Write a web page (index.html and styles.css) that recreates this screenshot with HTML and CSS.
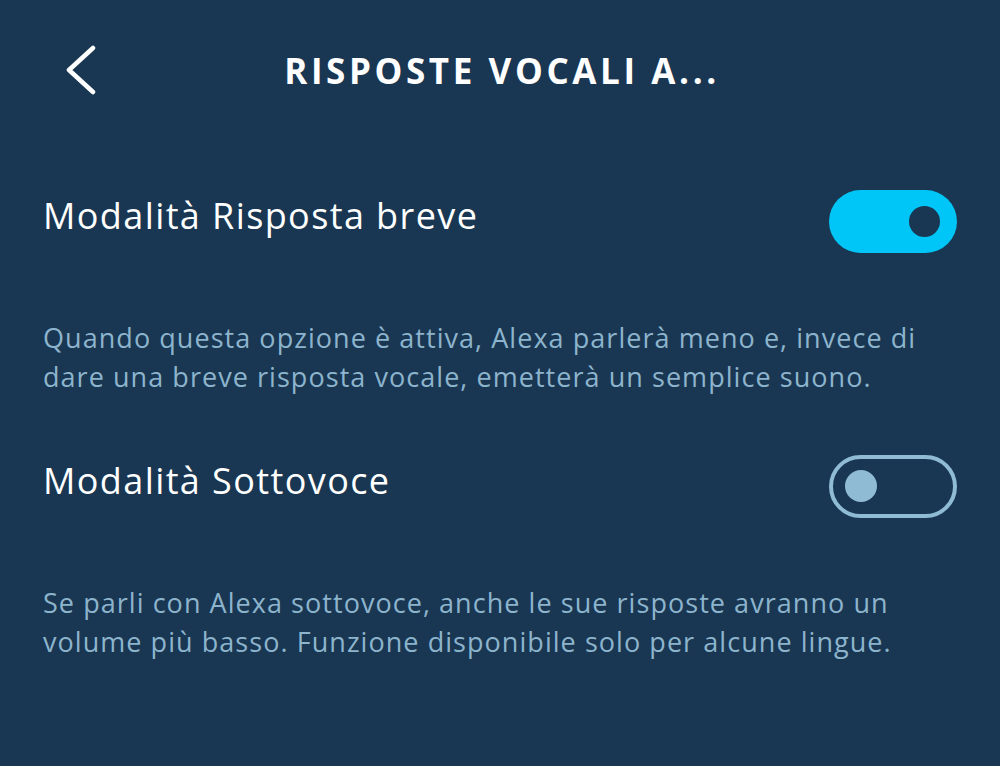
FILE: index.html
```html
<!DOCTYPE html>
<html>
	<head>
		<meta charset="utf-8">
		<meta name="viewport" content="width=device-width,initial-scale=1.0">
		<title>Risposte vocali Alexa</title>
		<link rel="stylesheet" href="styles.css">
	</head>
	<body>
		<header class="topbar">
			<a class="back" href="#">
				<svg width="34" height="50" viewBox="0 0 34 50">
					<path d="M30 3 L6 25 L30 47" fill="none" stroke="#ffffff" stroke-width="4.5" stroke-linecap="round" stroke-linejoin="round"/>
				</svg>
			</a>
			<h1 class="title">RISPOSTE VOCALI A...</h1>
		</header>
		<section class="setting">
			<div class="row">
				<span class="label">Modalità Risposta breve</span>
				<span class="toggle on"><span class="knob"></span></span>
			</div>
			<p class="desc">Quando questa opzione è attiva, Alexa parlerà meno e, invece di dare una breve risposta vocale, emetterà un semplice suono.</p>
		</section>
		<section class="setting">
			<div class="row">
				<span class="label">Modalità Sottovoce</span>
				<span class="toggle off"><span class="knob"></span></span>
			</div>
			<p class="desc">Se parli con Alexa sottovoce, anche le sue risposte avranno un volume più basso. Funzione disponibile solo per alcune lingue.</p>
		</section>
	</body>
</html>
```

FILE: styles.css
```css
* {
	margin: 0;
	padding: 0;
	box-sizing: border-box;
}

html, body {
	height: 100%;
}

body {
	background: #193752;
	font-family: "Open Sans", "Noto Sans", sans-serif;
	color: #ffffff;
	padding: 0 43px;
}

.topbar {
	display: flex;
	align-items: center;
	height: 140px;
}

.back {
	display: block;
	width: 34px;
	height: 50px;
	margin-left: 20px;
}

.title {
	flex: 1;
	text-align: center;
	font-size: 35px;
	font-weight: 700;
	letter-spacing: 3.6px;
	padding-right: 50px;
}

.setting {
	padding-bottom: 9px;
}

.row {
	display: flex;
	align-items: center;
	justify-content: space-between;
	height: 150px;
}

.label {
	font-size: 36px;
	letter-spacing: 1.4px;
}

.toggle {
	display: flex;
	align-items: center;
	width: 128px;
	height: 63px;
	margin-top: 12px;
	border-radius: 32px;
}

.toggle.on {
	background: #00c6f8;
	justify-content: flex-end;
	padding-right: 17px;
}

.toggle.on .knob {
	width: 31px;
	height: 31px;
	border-radius: 50%;
	background: #193752;
}

.toggle.off {
	border: 4px solid #8fbbd4;
	padding-left: 12px;
}

.toggle.off .knob {
	width: 32px;
	height: 32px;
	border-radius: 50%;
	background: #8fbbd4;
}

.desc {
	margin-top: 28px;
	font-size: 27px;
	line-height: 39px;
	letter-spacing: 1.05px;
	color: #8db4cd;
	padding-right: 25px;
}
```
